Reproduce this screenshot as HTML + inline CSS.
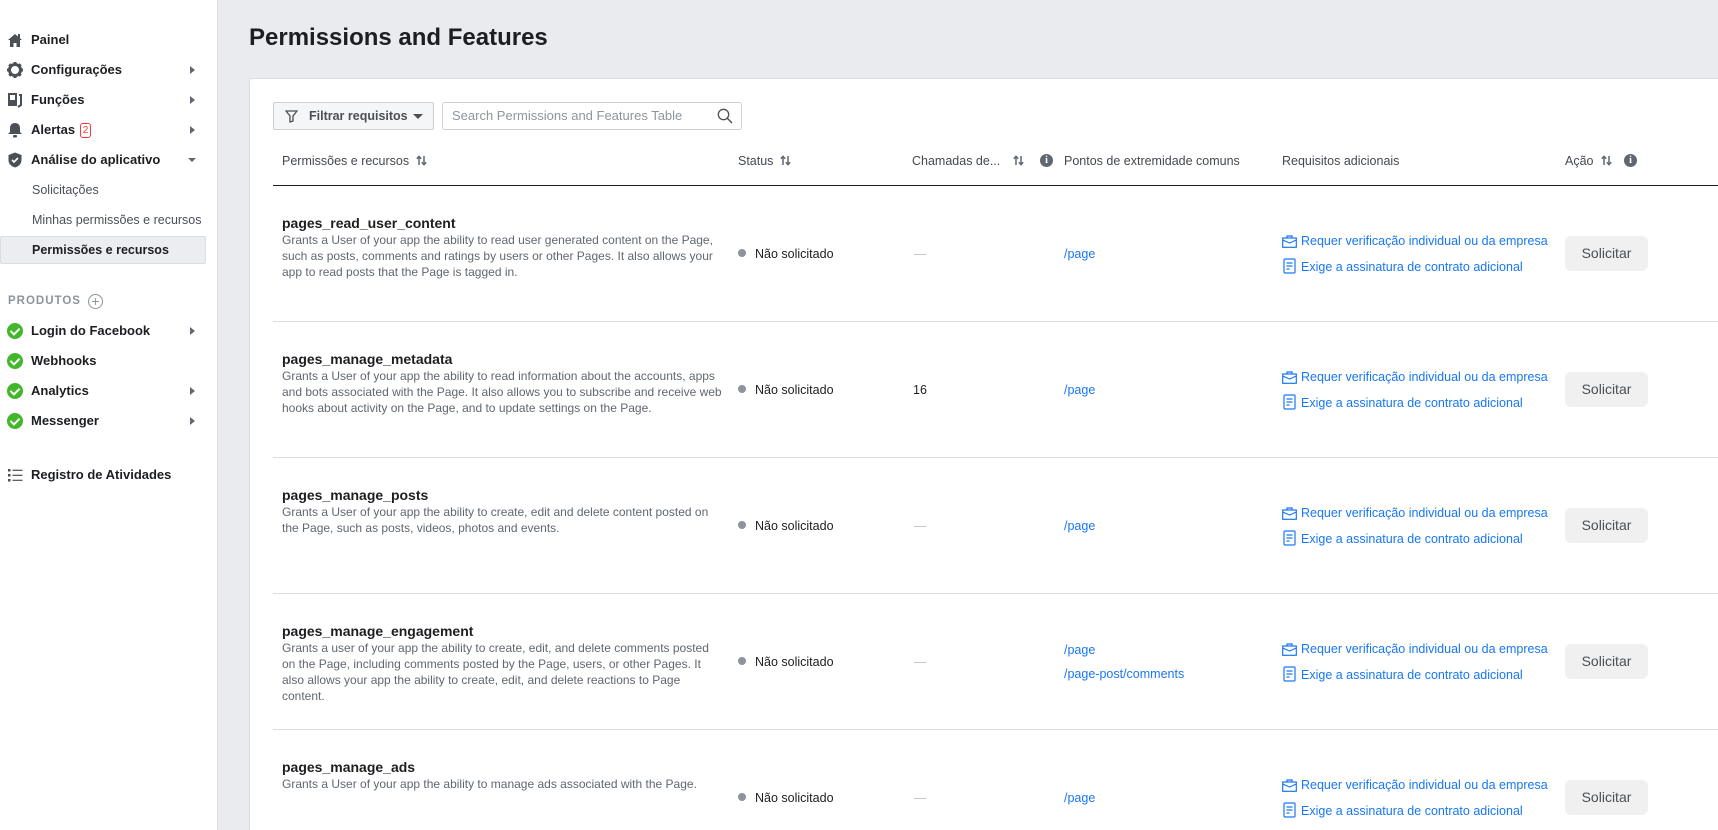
<!DOCTYPE html>
<html><head><meta charset="utf-8">
<style>
*{box-sizing:border-box;margin:0;padding:0}
html,body{width:1718px;height:830px;overflow:hidden}
body{background:#e9ebee;font-family:"Liberation Sans",Arial,sans-serif;position:relative;color:#1c1e21}
#side{position:absolute;left:0;top:0;width:218px;height:830px;background:#fff;border-right:1px solid #dadde1}
.si{position:absolute;left:0;width:210px;height:28px;font-size:13px;font-weight:bold;color:#1c1e21;line-height:28px}
.si .ic{position:absolute;left:7px;top:6px;width:16px;height:16px}
.si .tx{position:absolute;left:31px;white-space:nowrap}
.si .ar{position:absolute;left:190px;top:10px;width:0;height:0;border-left:5px solid #606770;border-top:4px solid transparent;border-bottom:4px solid transparent}
.sub{font-weight:normal;color:#4b4f56;font-size:12.5px}
.chk{position:absolute;left:7px;top:6px;width:16px;height:16px;border-radius:50%;background:#42b72a}
.chk:after{content:"";position:absolute;left:5px;top:3px;width:4px;height:7px;border:solid #fff;border-width:0 2px 2px 0;transform:rotate(45deg)}
h1{position:absolute;left:249px;top:24px;font-size:24px;font-weight:bold;color:#1c1e21}
#card{position:absolute;left:249px;top:78px;width:1480px;height:760px;background:#fff;border:1px solid #dadde1;border-radius:3px}
.btnf{position:absolute;left:273px;top:102px;width:161px;height:28px;background:#f5f6f7;border:1px solid #ccd0d5;border-radius:2px;font-size:12.5px;font-weight:bold;color:#4b4f56;line-height:26px}
.srch{position:absolute;left:442px;top:102px;width:300px;height:28px;border:1px solid #ccd0d5;border-radius:3px;font-size:13px;color:#90949c;line-height:26px;padding-left:9px}
.hd{position:absolute;top:154px;font-size:12.5px;color:#444950;white-space:nowrap}
.hd svg{vertical-align:-1px;margin-left:7px}
.info{position:absolute;width:13px;height:13px;border-radius:50%;background:#606770;color:#fff;font-size:10px;font-weight:bold;text-align:center;line-height:13px;font-family:"Liberation Serif",serif}
.hline{position:absolute;left:273px;top:185px;width:1445px;height:1px;background:#1c1e21}
.row{position:absolute;left:273px;width:1445px;height:136px;border-bottom:1px solid #dadde1}
.pc{position:absolute;left:9px;top:28px;width:440px}
.pt{font-size:14px;font-weight:bold;line-height:18px;color:#1c1e21}
.pd{font-size:12px;line-height:16px;color:#606770}
.mid{position:absolute;top:0;height:135px;display:flex;flex-direction:column;justify-content:center;font-size:12.5px}
.dot{display:inline-block;width:8px;height:8px;border-radius:50%;background:#8d949e;margin-right:9px;vertical-align:1px}
.lk{color:#1877f2;font-size:12.5px}
.req{line-height:26px;color:#1877f2;font-size:12.5px;white-space:nowrap}
.req svg{vertical-align:-3px;margin-right:4px}
.sb{position:absolute;left:1292px;top:50px;width:83px;height:35px;background:#f0f0f0;border-radius:6px;font-size:14px;color:#4b4f56;text-align:center;line-height:35px}
</style></head><body>
<div id="side">
 <div class="si" style="top:26px"><svg class="ic" viewBox="0 0 16 16"><path d="M1 8L8 2l7 6h-2v7H9.5v-4h-3v4H3V8z" fill="#4b4f56"/><rect x="11" y="2" width="2" height="4" fill="#4b4f56"/></svg><span class="tx">Painel</span></div>
 <div class="si" style="top:56px"><svg class="ic" viewBox="0 0 16 16"><circle cx="8" cy="8" r="5.5" fill="none" stroke="#4b4f56" stroke-width="3"/><g stroke="#4b4f56" stroke-width="3"><path d="M8 0v3M8 13v3M0 8h3M13 8h3M2.3 2.3l2 2M11.7 11.7l2 2M2.3 13.7l2-2M11.7 4.3l2-2"/></g></svg><span class="tx">Configurações</span><i class="ar"></i></div>
 <div class="si" style="top:86px"><svg class="ic" viewBox="0 0 16 16"><rect x="1" y="1" width="9" height="13" fill="#4b4f56"/><rect x="3" y="3" width="5" height="5" fill="#fff"/><path d="M12 3h2v10l-3 2" fill="none" stroke="#4b4f56" stroke-width="2"/></svg><span class="tx">Funções</span><i class="ar"></i></div>
 <div class="si" style="top:116px"><svg class="ic" viewBox="0 0 16 16"><path d="M8 1c3 0 5 2 5 5v4l2 2H1l2-2V6c0-3 2-5 5-5z" fill="#4b4f56"/><rect x="6" y="13" width="4" height="2.5" rx="1" fill="#4b4f56"/></svg><span class="tx">Alertas</span><span style="position:absolute;left:80px;top:7px;width:11px;height:15px;border:1px solid #fa383e;border-radius:3px;color:#fa383e;font-size:10px;line-height:13px;text-align:center;font-weight:normal">2</span><i class="ar"></i></div>
 <div class="si" style="top:146px"><svg class="ic" viewBox="0 0 16 16"><path d="M8 0.5L14.5 3v5c0 4-3 6.5-6.5 7.5C4.5 14.5 1.5 12 1.5 8V3z" fill="#4b4f56"/><path d="M5 8l2 2 4-4" fill="none" stroke="#fff" stroke-width="1.6"/></svg><span class="tx">Análise do aplicativo</span><i style="position:absolute;left:188px;top:12px;border-top:4px solid #606770;border-left:4px solid transparent;border-right:4px solid transparent"></i></div>
 <div class="si sub" style="top:176px"><span class="tx" style="left:32px">Solicitações</span></div>
 <div class="si sub" style="top:206px"><span class="tx" style="left:32px">Minhas permissões e recursos</span></div>
 <div class="si" style="top:236px;width:206px;background:#ebedf0;border:1px solid #dadde1;border-radius:2px;line-height:26px;font-size:12.5px"><span class="tx" style="left:31px">Permissões e recursos</span></div>
 <div class="si" style="top:287px;color:#8d949e;font-size:11.5px"><span class="tx" style="left:8px;letter-spacing:1px">PRODUTOS</span><span style="position:absolute;left:88px;top:7px;width:15px;height:15px;border:1.3px solid #8d949e;border-radius:50%;line-height:12px;text-align:center;font-weight:normal;font-size:14px">+</span></div>
 <div class="si" style="top:317px"><i class="chk"></i><span class="tx">Login do Facebook</span><i class="ar"></i></div>
 <div class="si" style="top:347px"><i class="chk"></i><span class="tx">Webhooks</span></div>
 <div class="si" style="top:377px"><i class="chk"></i><span class="tx">Analytics</span><i class="ar"></i></div>
 <div class="si" style="top:407px"><i class="chk"></i><span class="tx">Messenger</span><i class="ar"></i></div>
 <div class="si" style="top:461px"><svg class="ic" viewBox="0 0 16 16" fill="#4b4f56"><rect x="1" y="2" width="2.5" height="2.5"/><rect x="1" y="7" width="2.5" height="2.5"/><rect x="1" y="12" width="2.5" height="2.5"/><rect x="5.5" y="2.7" width="10" height="1.2"/><rect x="5.5" y="7.7" width="10" height="1.2"/><rect x="5.5" y="12.7" width="10" height="1.2"/></svg><span class="tx">Registro de Atividades</span></div>
</div>
<h1>Permissions and Features</h1>
<div id="card"></div>
<div class="btnf"><svg style="position:absolute;left:11px;top:7px" width="13" height="13" viewBox="0 0 13 13"><path d="M1 1h11L8 6v5L5 12V6z" fill="none" stroke="#4b4f56" stroke-width="1.3"/></svg><span style="position:absolute;left:35px">Filtrar requisitos</span><i style="position:absolute;left:139px;top:11px;border-top:5px solid #4b4f56;border-left:5px solid transparent;border-right:5px solid transparent"></i></div>
<div class="srch">Search Permissions and Features Table<svg style="position:absolute;right:8px;top:5px" width="16" height="16" viewBox="0 0 16 16"><circle cx="6.5" cy="6.5" r="5.2" fill="none" stroke="#4b4f56" stroke-width="1.3"/><path d="M10.3 10.3L15 15" stroke="#4b4f56" stroke-width="1.4"/></svg></div>
<div class="hd" style="left:282px">Permissões e recursos<svg width="11" height="11" viewBox="0 0 11 11"><path d="M3 10V1.5M0.8 3.7L3 1.3 5.2 3.7M8 1v8.5M5.8 7.3L8 9.7l2.2-2.4" fill="none" stroke="#606770" stroke-width="1.5"/></svg></div>
<div class="hd" style="left:738px">Status<svg width="11" height="11" viewBox="0 0 11 11"><path d="M3 10V1.5M0.8 3.7L3 1.3 5.2 3.7M8 1v8.5M5.8 7.3L8 9.7l2.2-2.4" fill="none" stroke="#606770" stroke-width="1.5"/></svg></div>
<div class="hd" style="left:912px">Chamadas de...</div>
<div class="hd" style="left:1006px"><svg width="11" height="11" viewBox="0 0 11 11"><path d="M3 10V1.5M0.8 3.7L3 1.3 5.2 3.7M8 1v8.5M5.8 7.3L8 9.7l2.2-2.4" fill="none" stroke="#606770" stroke-width="1.5"/></svg></div>
<div class="info" style="left:1040px;top:154px">i</div>
<div class="hd" style="left:1064px">Pontos de extremidade comuns</div>
<div class="hd" style="left:1282px">Requisitos adicionais</div>
<div class="hd" style="left:1565px">Ação<svg width="11" height="11" viewBox="0 0 11 11"><path d="M3 10V1.5M0.8 3.7L3 1.3 5.2 3.7M8 1v8.5M5.8 7.3L8 9.7l2.2-2.4" fill="none" stroke="#606770" stroke-width="1.5"/></svg></div>
<div class="info" style="left:1624px;top:154px">i</div>
<div class="hline"></div>

<div class="row" style="top:186px">
 <div class="pc"><div class="pt">pages_read_user_content</div><div class="pd">Grants a User of your app the ability to read user generated content on the Page, such as posts, comments and ratings by users or other Pages. It also allows your app to read posts that the Page is tagged in.</div></div>
 <div class="mid" style="left:465px"><div><span class="dot"></span>Não solicitado</div></div>
 <div class="mid" style="left:641px;color:#bec3c9">—</div>
 <div class="mid lk" style="left:791px">/page</div>
 <div class="mid" style="left:1009px"><div class="req"><svg width="15" height="13" viewBox="0 0 15 13"><rect x="0.7" y="3" width="13.6" height="9.3" fill="none" stroke="#1877f2" stroke-width="1.2"/><path d="M5 3V1h5v2M0.7 5l6.8 3 6.8-3" fill="none" stroke="#1877f2" stroke-width="1.2"/></svg>Requer verificação individual ou da empresa</div><div class="req"><svg width="15" height="16" viewBox="0 0 15 16"><rect x="2" y="1" width="11" height="14" rx="1" fill="none" stroke="#1877f2" stroke-width="1.2"/><path d="M4.5 5h6M4.5 8h6M4.5 11h3" stroke="#1877f2" stroke-width="1.2"/></svg>Exige a assinatura de contrato adicional</div></div>
 <div class="sb">Solicitar</div>
</div>
<div class="row" style="top:322px">
 <div class="pc"><div class="pt">pages_manage_metadata</div><div class="pd">Grants a User of your app the ability to read information about the accounts, apps and bots associated with the Page. It also allows you to subscribe and receive web hooks about activity on the Page, and to update settings on the Page.</div></div>
 <div class="mid" style="left:465px"><div><span class="dot"></span>Não solicitado</div></div>
 <div class="mid" style="left:640px">16</div>
 <div class="mid lk" style="left:791px">/page</div>
 <div class="mid" style="left:1009px"><div class="req"><svg width="15" height="13" viewBox="0 0 15 13"><rect x="0.7" y="3" width="13.6" height="9.3" fill="none" stroke="#1877f2" stroke-width="1.2"/><path d="M5 3V1h5v2M0.7 5l6.8 3 6.8-3" fill="none" stroke="#1877f2" stroke-width="1.2"/></svg>Requer verificação individual ou da empresa</div><div class="req"><svg width="15" height="16" viewBox="0 0 15 16"><rect x="2" y="1" width="11" height="14" rx="1" fill="none" stroke="#1877f2" stroke-width="1.2"/><path d="M4.5 5h6M4.5 8h6M4.5 11h3" stroke="#1877f2" stroke-width="1.2"/></svg>Exige a assinatura de contrato adicional</div></div>
 <div class="sb">Solicitar</div>
</div>
<div class="row" style="top:458px">
 <div class="pc"><div class="pt">pages_manage_posts</div><div class="pd">Grants a User of your app the ability to create, edit and delete content posted on the Page, such as posts, videos, photos and events.</div></div>
 <div class="mid" style="left:465px"><div><span class="dot"></span>Não solicitado</div></div>
 <div class="mid" style="left:641px;color:#bec3c9">—</div>
 <div class="mid lk" style="left:791px">/page</div>
 <div class="mid" style="left:1009px"><div class="req"><svg width="15" height="13" viewBox="0 0 15 13"><rect x="0.7" y="3" width="13.6" height="9.3" fill="none" stroke="#1877f2" stroke-width="1.2"/><path d="M5 3V1h5v2M0.7 5l6.8 3 6.8-3" fill="none" stroke="#1877f2" stroke-width="1.2"/></svg>Requer verificação individual ou da empresa</div><div class="req"><svg width="15" height="16" viewBox="0 0 15 16"><rect x="2" y="1" width="11" height="14" rx="1" fill="none" stroke="#1877f2" stroke-width="1.2"/><path d="M4.5 5h6M4.5 8h6M4.5 11h3" stroke="#1877f2" stroke-width="1.2"/></svg>Exige a assinatura de contrato adicional</div></div>
 <div class="sb">Solicitar</div>
</div>
<div class="row" style="top:594px">
 <div class="pc"><div class="pt">pages_manage_engagement</div><div class="pd">Grants a user of your app the ability to create, edit, and delete comments posted<br>on the Page, including comments posted by the Page, users, or other Pages. It also allows your app the ability to create, edit, and delete reactions to Page content.</div></div>
 <div class="mid" style="left:465px"><div><span class="dot"></span>Não solicitado</div></div>
 <div class="mid" style="left:641px;color:#bec3c9">—</div>
 <div class="mid lk" style="left:791px;line-height:24px"><div>/page</div><div>/page-post/comments</div></div>
 <div class="mid" style="left:1009px"><div class="req"><svg width="15" height="13" viewBox="0 0 15 13"><rect x="0.7" y="3" width="13.6" height="9.3" fill="none" stroke="#1877f2" stroke-width="1.2"/><path d="M5 3V1h5v2M0.7 5l6.8 3 6.8-3" fill="none" stroke="#1877f2" stroke-width="1.2"/></svg>Requer verificação individual ou da empresa</div><div class="req"><svg width="15" height="16" viewBox="0 0 15 16"><rect x="2" y="1" width="11" height="14" rx="1" fill="none" stroke="#1877f2" stroke-width="1.2"/><path d="M4.5 5h6M4.5 8h6M4.5 11h3" stroke="#1877f2" stroke-width="1.2"/></svg>Exige a assinatura de contrato adicional</div></div>
 <div class="sb">Solicitar</div>
</div>
<div class="row" style="top:730px">
 <div class="pc"><div class="pt">pages_manage_ads</div><div class="pd">Grants a User of your app the ability to manage ads associated with the Page.</div></div>
 <div class="mid" style="left:465px"><div><span class="dot"></span>Não solicitado</div></div>
 <div class="mid" style="left:641px;color:#bec3c9">—</div>
 <div class="mid lk" style="left:791px">/page</div>
 <div class="mid" style="left:1009px"><div class="req"><svg width="15" height="13" viewBox="0 0 15 13"><rect x="0.7" y="3" width="13.6" height="9.3" fill="none" stroke="#1877f2" stroke-width="1.2"/><path d="M5 3V1h5v2M0.7 5l6.8 3 6.8-3" fill="none" stroke="#1877f2" stroke-width="1.2"/></svg>Requer verificação individual ou da empresa</div><div class="req"><svg width="15" height="16" viewBox="0 0 15 16"><rect x="2" y="1" width="11" height="14" rx="1" fill="none" stroke="#1877f2" stroke-width="1.2"/><path d="M4.5 5h6M4.5 8h6M4.5 11h3" stroke="#1877f2" stroke-width="1.2"/></svg>Exige a assinatura de contrato adicional</div></div>
 <div class="sb">Solicitar</div>
</div>
</body></html>
